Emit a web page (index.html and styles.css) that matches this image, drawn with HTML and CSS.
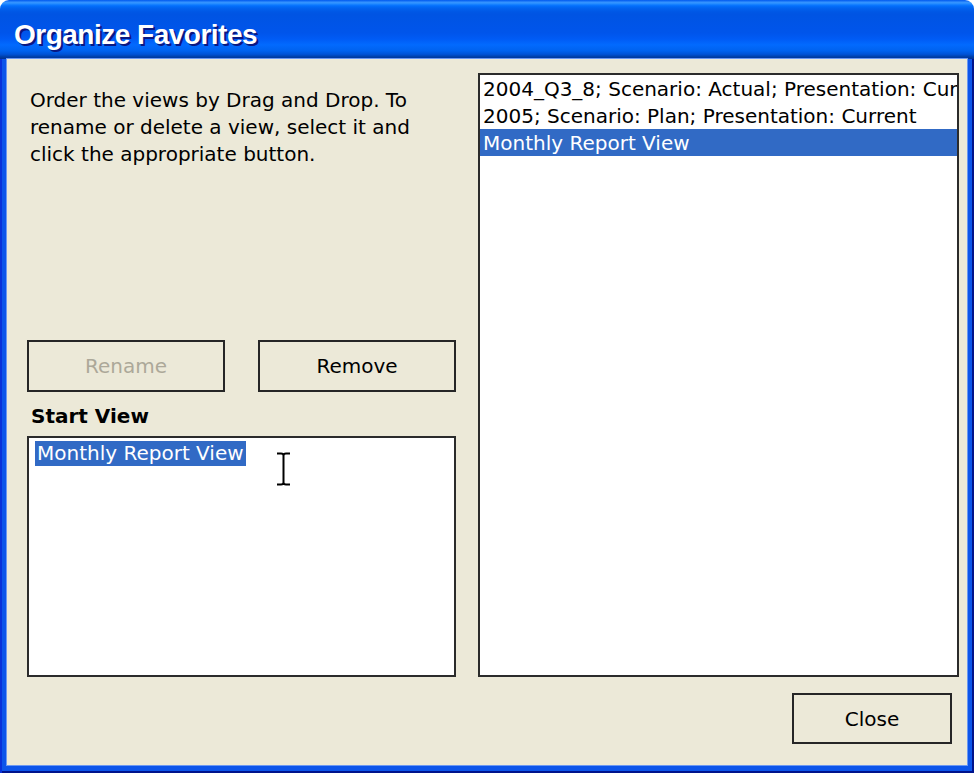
FILE: index.html
```html
<!DOCTYPE html>
<html>
<head>
<meta charset="utf-8">
<link rel="stylesheet" href="styles.css">
</head>
<body>
<div class="window">
  <div class="titlebar"><span class="title">Organize Favorites</span></div>
  <div class="frame">
    <div class="content">
      <div class="left">
        <p class="intro">Order the views by Drag and Drop. To rename or delete a view, select it and click the appropriate button.</p>
        <div class="actions">
          <button class="btn" disabled>Rename</button>
          <button class="btn">Remove</button>
        </div>
        <div class="label">Start View</div>
        <div class="startbox">
          <span class="selected-text">Monthly Report View</span>
          <svg class="ibeam" width="15" height="34" viewBox="0 0 15 34"><path d="M7.5 3V31M1 1.5H5Q7.5 1.5 7.5 3.5Q7.5 1.5 10 1.5H14M1 32.5H5Q7.5 32.5 7.5 30.5Q7.5 32.5 10 32.5H14" fill="none" stroke="#000" stroke-width="2"/></svg>
        </div>
      </div>
      <div class="listbox">
        <div class="row">2004_Q3_8; Scenario: Actual; Presentation: Current</div>
        <div class="row">2005; Scenario: Plan; Presentation: Current</div>
        <div class="row selected">Monthly Report View</div>
      </div>
      <div class="footer"><button class="btn close">Close</button></div>
    </div>
  </div>
</div>
</body>
</html>
```
FILE: styles.css
```css
body {
  margin: 0;
  background: #fff;
  font-family: "DejaVu Sans", sans-serif;
}
.window {
  width: 974px;
  height: 773px;
  display: flex;
  flex-direction: column;
  border-radius: 9px 9px 0 0;
  overflow: hidden;
}
.titlebar {
  height: 59px;
  flex: none;
  box-sizing: border-box;
  padding: 11px 0 0 14px;
  display: flex;
  align-items: center;
  background: linear-gradient(to bottom, #0058ee 0%, #3593ff 4%, #288eff 6%, #127dff 8%, #036ffc 10%, #0262ee 14%, #0057e5 20%, #0054e3 24%, #0055eb 56%, #005bf5 66%, #026afe 76%, #0062ef 86%, #0052d6 92%, #0040ab 96%, #003092 100%);
}
.title {
  font: bold 28px "Liberation Sans", sans-serif;
  letter-spacing: -0.5px;
  color: #fff;
  text-shadow: 2px 2px 0 #0a1883;
}
.frame {
  flex: 1;
  display: flex;
  padding: 0 7px 8px 7px;
  background: #0c55ea;
  box-shadow: inset 2px 0 #0831d9, inset -2px 0 #00138c, inset 0 -2px #00138c;
}
.content {
  flex: 1;
  background: #ece9d8;
  display: grid;
  grid-template-columns: 429px 481px;
  grid-template-rows: 604px 51px;
  column-gap: 22px;
  row-gap: 16px;
  padding: 14px 8px 21px 20px;
  box-shadow: 0 0 0 1px #6b98f2;
}
.left {
  display: flex;
  flex-direction: column;
}
.intro {
  margin: 14px 0 0 3px;
  font-size: 20px;
  line-height: 27px;
  color: #000;
}
.actions {
  margin-top: auto;
  display: flex;
  justify-content: space-between;
}
.btn {
  width: 198px;
  height: 52px;
  box-sizing: border-box;
  border: 2px solid #262626;
  background: #ece9d8;
  font: 20px "DejaVu Sans", sans-serif;
  color: #000;
  padding: 0;
}
.btn:disabled {
  color: #aca899;
}
.label {
  margin: 12px 0 8px 4px;
  font-weight: bold;
  font-size: 20px;
  line-height: 24px;
}
.startbox {
  height: 241px;
  box-sizing: border-box;
  border: 2px solid #2b2b2b;
  background: #fff;
  padding: 3px 6px;
  position: relative;
}
.selected-text {
  display: inline-block;
  background: #316ac5;
  color: #fff;
  font-size: 20px;
  line-height: 25px;
  padding: 0 2px;
}
.ibeam {
  position: absolute;
  left: 247px;
  top: 14px;
}
.listbox {
  border: 2px solid #2b2b2b;
  background: #fff;
  overflow: hidden;
}
.row {
  height: 27px;
  line-height: 29px;
  padding-left: 3px;
  white-space: nowrap;
  overflow: hidden;
  font-size: 20px;
  color: #000;
}
.row.selected {
  background: #316ac5;
  color: #fff;
}
.footer {
  grid-column: 2;
  display: flex;
  justify-content: flex-end;
  padding-right: 7px;
}
.close {
  width: 160px;
  height: 51px;
}
```
